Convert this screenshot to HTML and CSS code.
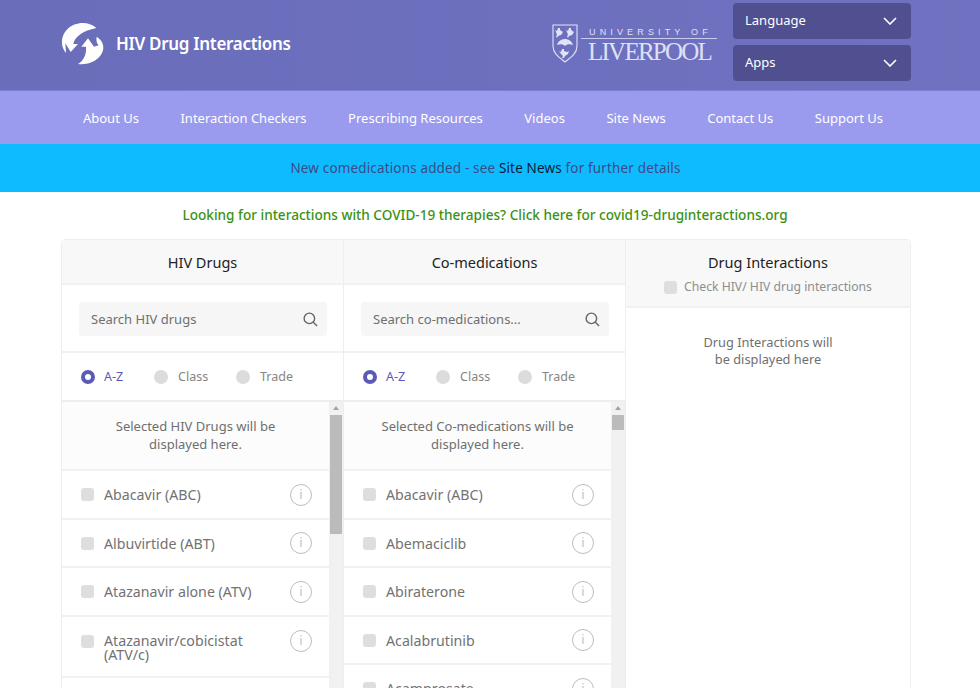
FILE: index.html
```html
<!DOCTYPE html>
<html lang="en">
<head>
<meta charset="utf-8">
<title>HIV Drug Interactions</title>
<link rel="stylesheet" href="styles.css">
</head>
<body>
<header class="top">
  <a class="brand">
    <svg class="brand-logo" viewBox="9 6 132 132" width="44" height="44">
      <path fill="#fff" d="M115 24C90 2 50 6 28 28 8 48 6 78 24 100L22 70 38 96 60 72H46C50 50 75 32 115 24Z"/>
      <path fill="#fff" d="M60 132C100 138 136 112 136 82 136 68 128 58 116 50 114 62 116 70 122 76L108 80 90 55 70 80H84C86 105 76 122 60 132Z"/>
    </svg>
    <span class="brand-name">HIV Drug Interactions</span>
  </a>
  <div class="top-right">
    <div class="uni">
      <svg class="crest" viewBox="0 0 26 39" width="26" height="39">
        <path fill="none" stroke="#e2e3f6" stroke-width="1.1" d="M1 1H25V22C25 30 18 34 13 38 8 34 1 30 1 22Z"/>
        <path fill="#e2e3f6" d="M3 6l2 1 1-3 2 0 0 2 3 2-2 3-3 1-1 2-1-2 1-1-1-3zM14 6l2 1 1-3 2 0 0 2 3 2-2 3-3 1-1 2-1-2 1-1-1-3z"/>
        <path fill="#e2e3f6" d="M5 21c1-4 5-6 8-6s7 2 8 6c-3-1-6-1-8 1-2-2-5-2-8-1z"/>
        <path fill="#e2e3f6" d="M7 27l2 1 1-3 2 0 0 2 3 1 2-1-1 3-3 2-1 2h-2l1-2-2-2z"/>
      </svg>
      <div class="uni-text">
        <div class="uni-top">UNIVERSITY OF</div>
        <div class="uni-name">LIVERPOOL</div>
      </div>
    </div>
    <div class="selects">
      <div class="select"><span>Language</span><svg class="chev" viewBox="0 0 14 8" width="14" height="8"><path d="M1 1l6 6 6-6"/></svg></div>
      <div class="select"><span>Apps</span><svg class="chev" viewBox="0 0 14 8" width="14" height="8"><path d="M1 1l6 6 6-6"/></svg></div>
    </div>
  </div>
</header>
<nav class="nav">
  <a>About Us</a><a>Interaction Checkers</a><a>Prescribing Resources</a><a>Videos</a><a>Site News</a><a>Contact Us</a><a>Support Us</a>
</nav>
<div class="banner"><span>New comedications added - see <b>Site News</b> for further details</span></div>
<p class="covid">Looking for interactions with COVID-19 therapies? Click here for covid19-druginteractions.org</p>
<main class="panel">
  <section class="col">
    <h2 class="col-head">HIV Drugs</h2>
    <div class="search-row"><div class="search"><span>Search HIV drugs</span><svg class="mag" viewBox="0 0 16 16" width="15" height="15"><circle cx="6.8" cy="6.8" r="5.6"/><path d="M11 11l4 4"/></svg></div></div>
    <div class="radios"><span class="radio on"><i></i>A-Z</span><span class="radio"><i></i>Class</span><span class="radio"><i></i>Trade</span></div>
    <div class="list-wrap">
      <div class="list">
        <div class="selected">Selected HIV Drugs will be<br>displayed here.</div>
        <div class="row"><i class="check"></i><span class="label">Abacavir (ABC)</span><span class="info">i</span></div>
        <div class="row"><i class="check"></i><span class="label">Albuvirtide (ABT)</span><span class="info">i</span></div>
        <div class="row"><i class="check"></i><span class="label">Atazanavir alone (ATV)</span><span class="info">i</span></div>
        <div class="row tall"><i class="check"></i><span class="label">Atazanavir/cobicistat<br>(ATV/c)</span><span class="info">i</span></div>
      </div>
      <div class="scroll"><b class="arrow"></b><b class="thumb long"></b></div>
    </div>
  </section>
  <section class="col">
    <h2 class="col-head">Co-medications</h2>
    <div class="search-row"><div class="search"><span>Search co-medications...</span><svg class="mag" viewBox="0 0 16 16" width="15" height="15"><circle cx="6.8" cy="6.8" r="5.6"/><path d="M11 11l4 4"/></svg></div></div>
    <div class="radios"><span class="radio on"><i></i>A-Z</span><span class="radio"><i></i>Class</span><span class="radio"><i></i>Trade</span></div>
    <div class="list-wrap">
      <div class="list">
        <div class="selected">Selected Co-medications will be<br>displayed here.</div>
        <div class="row"><i class="check"></i><span class="label">Abacavir (ABC)</span><span class="info">i</span></div>
        <div class="row"><i class="check"></i><span class="label">Abemaciclib</span><span class="info">i</span></div>
        <div class="row"><i class="check"></i><span class="label">Abiraterone</span><span class="info">i</span></div>
        <div class="row"><i class="check"></i><span class="label">Acalabrutinib</span><span class="info">i</span></div>
        <div class="row"><i class="check"></i><span class="label">Acamprosate</span><span class="info">i</span></div>
      </div>
      <div class="scroll"><b class="arrow"></b><b class="thumb short"></b></div>
    </div>
  </section>
  <section class="col last">
    <div class="col-head wide">
      <h2>Drug Interactions</h2>
      <div class="hiv-check"><i class="check"></i>Check HIV/ HIV drug interactions</div>
    </div>
    <div class="placeholder">Drug Interactions will<br>be displayed here</div>
  </section>
</main>
</body>
</html>
```
FILE: styles.css
```css
* { box-sizing: border-box; }
html, body { margin: 0; height: 688px; overflow: hidden; background: #fff; }
body { font-family: "Noto Sans", "Open Sans", sans-serif; font-size: 13px; color: #6f6f6f; }
.top { height: 91px; background: linear-gradient(90deg, #6a6dba, #7072c1); padding: 3px 69px 0 61px; display: flex; justify-content: space-between; border-bottom: 1px solid #7c7ed0; }
.brand { display: flex; align-items: center; gap: 11px; height: 81px; }
.brand-logo { display: block; }
.brand-name { color: #fff; font-size: 17px; font-weight: 600; letter-spacing: -0.3px; }
.top-right { display: flex; gap: 16px; }
.uni { display: flex; align-items: flex-start; gap: 3px; padding-top: 21px; }
.crest { display: block; }
.uni-text { width: 136px; color: #dfe0f5; padding-top: 2px; }
.uni-top { font: 9px/12px "Liberation Sans", sans-serif; letter-spacing: 4.15px; padding-left: 8px; white-space: nowrap; border-bottom: 1px solid #c9cbee; height: 13px; }
.uni-name { font: 25px/25px "Liberation Serif", serif; letter-spacing: -1.75px; padding-left: 7px; white-space: nowrap; }
.selects { width: 178px; display: flex; flex-direction: column; gap: 6px; }
.select { height: 36px; background: #504f90; border-radius: 4px; color: #fff; font-size: 13px; display: flex; align-items: center; justify-content: space-between; padding: 0 14px 2px 12px; }
.chev { fill: none; stroke: #fff; stroke-width: 1.6; margin-top: 2px; }
.nav { height: 53px; background: #9a9aee; display: flex; justify-content: center; gap: 41.5px; align-items: center; padding-right: 14px; }
.nav a { color: #fff; font-size: 13px; }
.banner { height: 48px; background: #0fbbff; color: #3d4a86; font-size: 13.5px; letter-spacing: 0.15px; text-align: center; line-height: 48px; padding-right: 9px; }
.banner b { color: #0c1c38; font-weight: 400; }
.covid { margin: 0; height: 47px; line-height: 46px; text-align: center; color: #3b9212; font-size: 13.6px; font-weight: 500; padding-right: 10px; }
.panel { margin: 0 69px 0 61px; height: 520px; display: grid; grid-template-columns: 282px 282px 284px; border: 1px solid #eee; border-radius: 4px 4px 0 0; }
.col { border-right: 1px solid #eee; display: flex; flex-direction: column; min-width: 0; }
.col.last { border-right: 0; }
.col-head { margin: 0; height: 45px; background: #f8f8f8; border-bottom: 2px solid #f1f1f1; color: #222; font-size: 14.5px; font-weight: 400; line-height: 45px; text-align: center; }
.col-head.wide { height: 68px; }
.col-head h2 { margin: 0; font-size: 14.5px; font-weight: 400; line-height: 45px; }
.hiv-check { display: flex; align-items: center; justify-content: center; gap: 7px; color: #8e8e8e; font-size: 12.2px; line-height: 14px; margin-top: -5px; }
.search-row { height: 68px; padding: 17px 16px 0 17px; border-bottom: 2px solid #f1f1f1; }
.search { height: 34px; background: #f6f6f6; border-radius: 4px; display: flex; align-items: center; justify-content: space-between; padding: 0 9px 0 12px; font-size: 13px; }
.mag { fill: none; stroke: #666; stroke-width: 1.5; }
.radios { height: 49px; display: flex; align-items: center; padding-left: 19px; border-bottom: 2px solid #eee; font-size: 12.5px; }
.radio { display: flex; align-items: center; gap: 10px; color: #858585; width: 73px; }
.radio + .radio { width: 82px; }
.radio i { width: 14px; height: 14px; border-radius: 50%; background: #dcdcdc; }
.radio.on { color: #5b5bb5; gap: 9px; }
.radio.on i { background: #fff; border: 4px solid #5b5bb5; }
.list-wrap { flex: 1; display: flex; min-height: 0; overflow: hidden; }
.list { flex: 1; min-width: 0; }
.selected { height: 69px; background: #fcfcfc; border-bottom: 2px solid #f1f1f1; text-align: center; font-size: 13px; line-height: 18px; padding-top: 15px; }
.row { height: 48.5px; display: flex; align-items: center; padding: 1px 17px 0 19px; border-bottom: 2px solid #f1f1f1; font-size: 14.2px; }
.row.tall { height: 61px; align-items: flex-start; padding-top: 13px; }
.row.tall .label { line-height: 14px; margin-top: 4px; }
.row.tall .check { margin-top: 5px; }
.check { flex: none; width: 13px; height: 13px; border-radius: 3px; background: #dedede; display: block; }
.label { flex: 1; margin-left: 10px; color: #727272; }
.info { flex: none; width: 22px; height: 22px; border-radius: 50%; border: 1.5px solid #bdbdbd; color: #c4c4c4; font-size: 13px; line-height: 19px; text-align: center; }
.scroll { flex: none; width: 14px; background: #f1f1f1; padding-top: 4px; display: flex; flex-direction: column; align-items: center; }
.arrow { width: 0; height: 0; border: 3.5px solid transparent; border-top: 0; border-bottom: 4px solid #a3a3a3; margin-bottom: 5px; }
.thumb { width: 12px; background: #bbb; display: block; }
.thumb.long { height: 119px; }
.thumb.short { height: 15px; }
.placeholder { text-align: center; font-size: 12.8px; line-height: 17px; padding-top: 26px; }
```
